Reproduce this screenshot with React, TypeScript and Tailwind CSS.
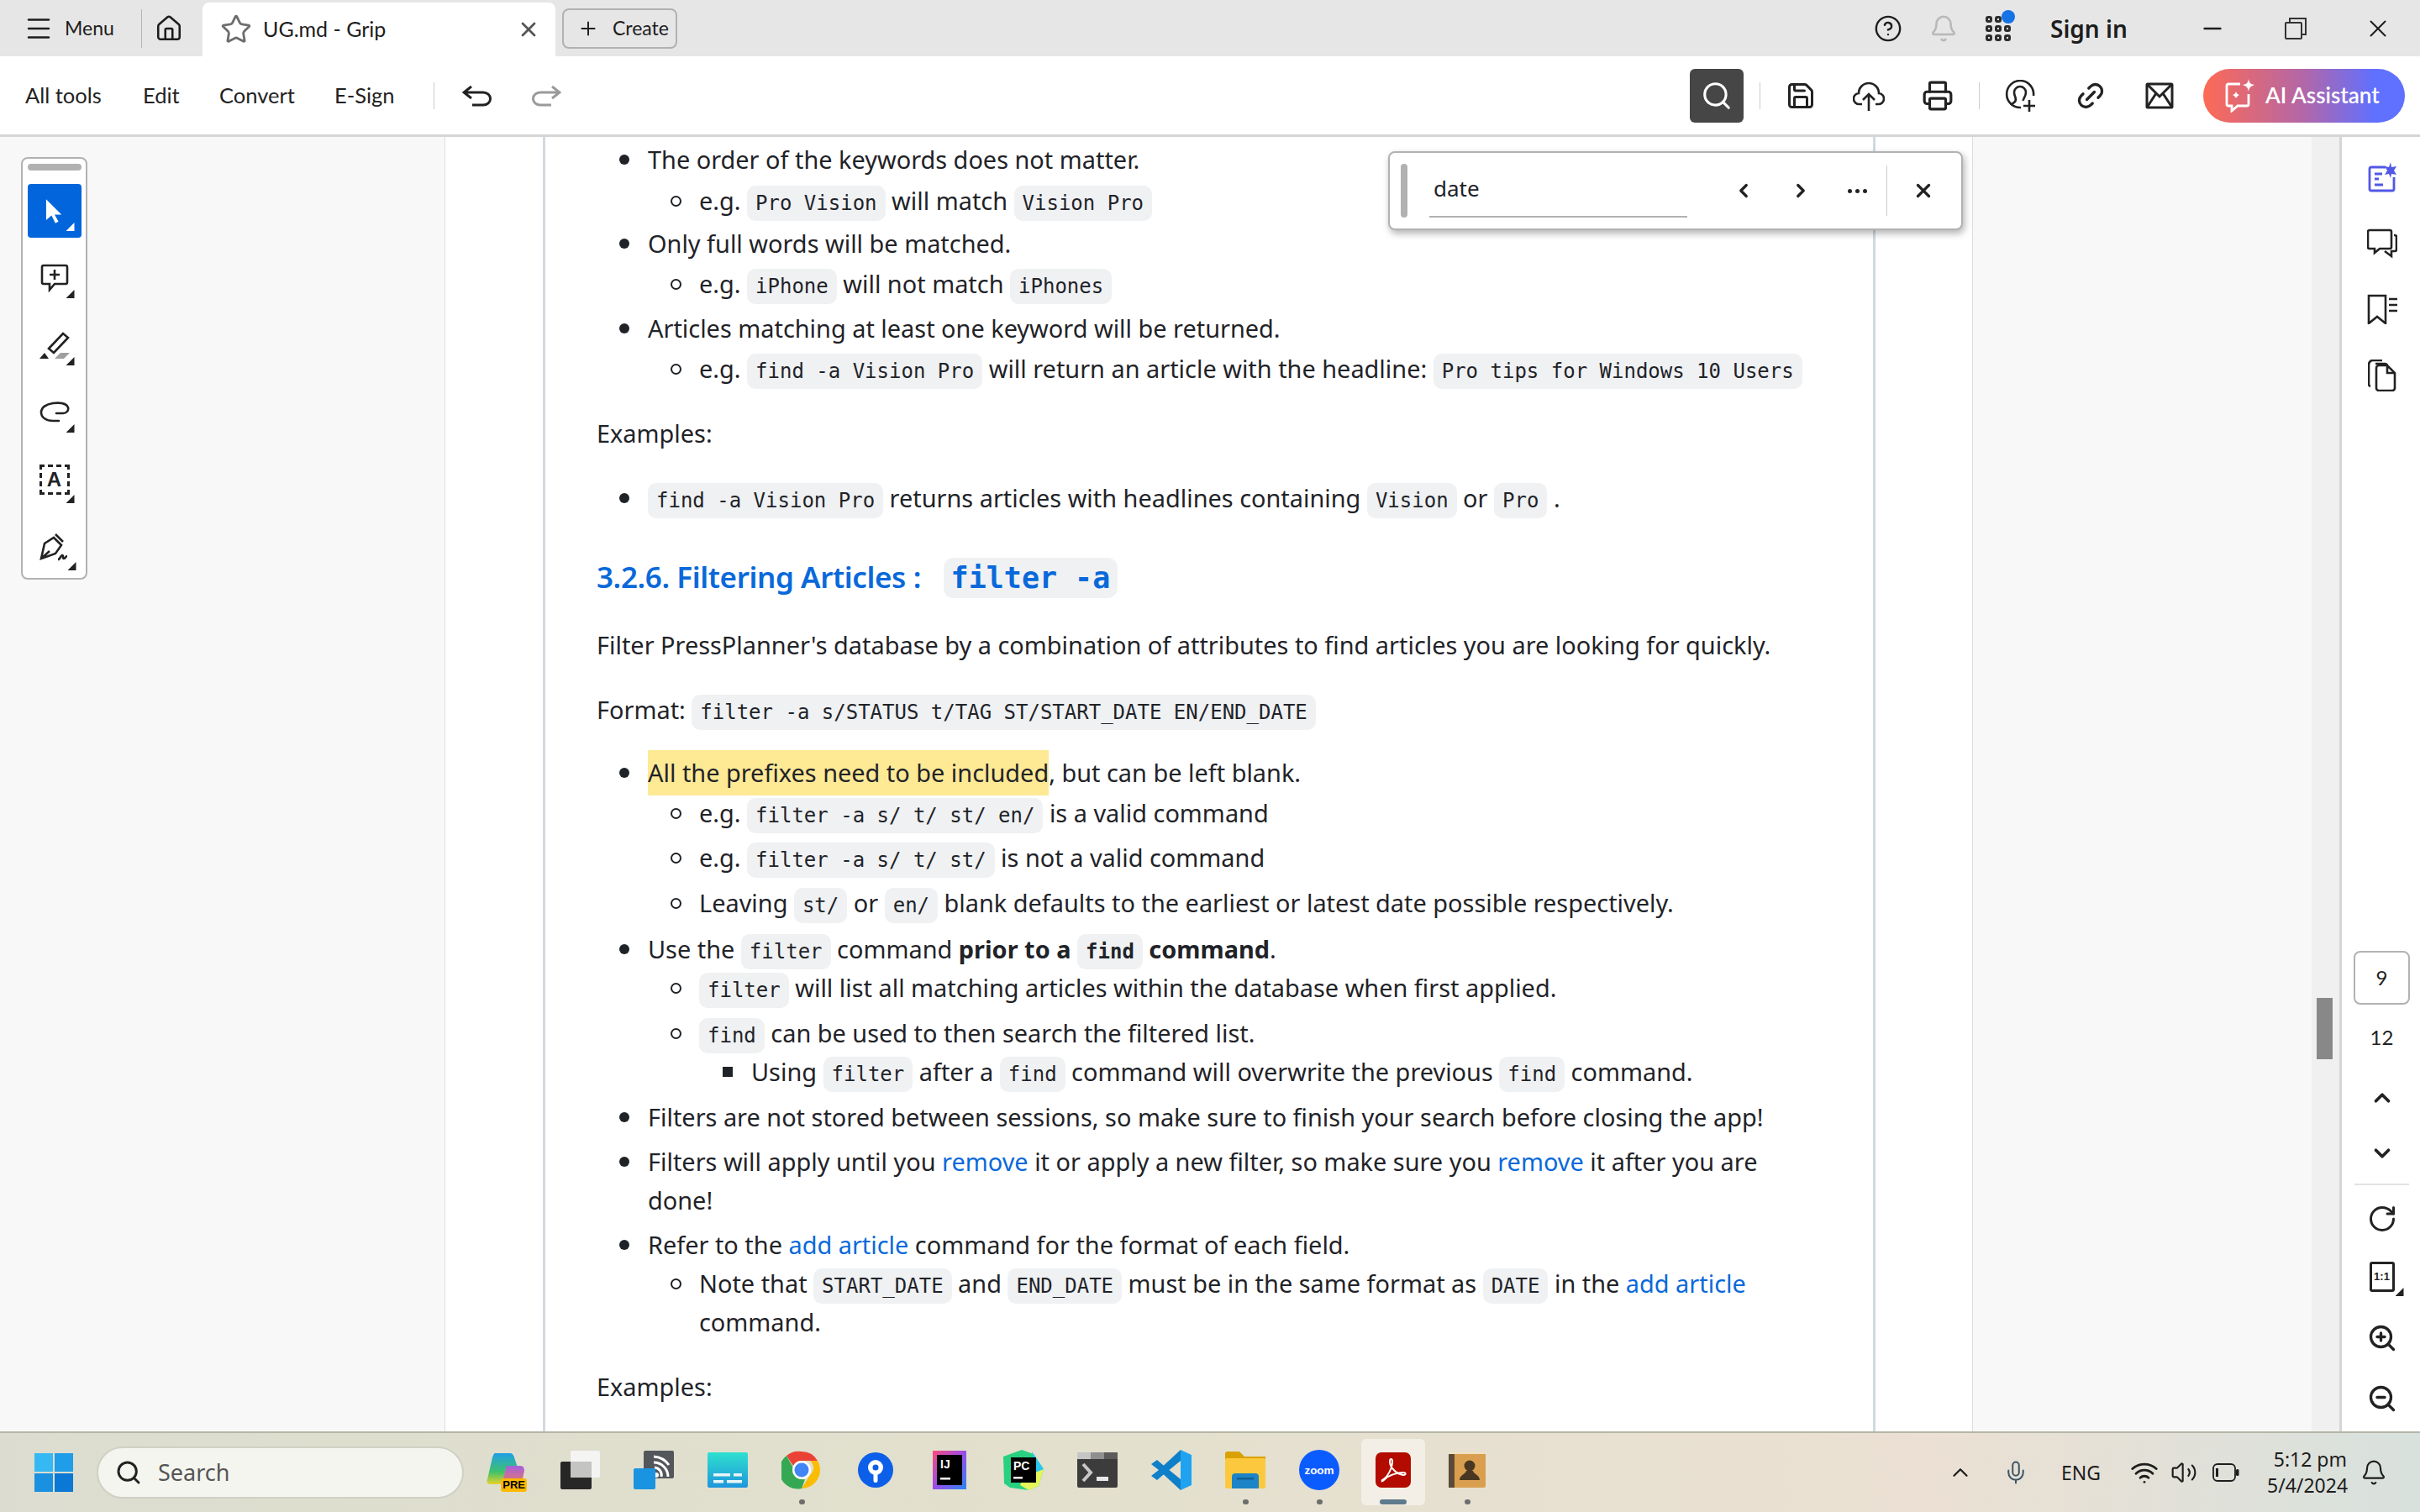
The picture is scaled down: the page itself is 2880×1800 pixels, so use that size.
import type { ReactNode } from "react"
import {
  ChevronLeft,
  ChevronRight,
  ChevronUp,
  ChevronDown,
  CircleHelp,
  Bell,
  Home,
  Link2,
  Menu,
  Minus,
  Plus,
  Printer,
  RotateCw,
  Save,
  Search,
  Star,
  X,
  ZoomIn,
  ZoomOut,
  Mic,
  Wifi,
  Volume2,
} from "lucide-react"

const UI = "font-['Lato','Noto_Sans',sans-serif]"

const BULLETS = {
  disc: "before:left-[-34px] before:top-[17px] before:h-[12px] before:w-[12px] before:rounded-full before:bg-[#1f2328]",
  circle: "before:left-[-34px] before:top-[17px] before:h-[13px] before:w-[13px] before:rounded-full before:border-2 before:border-[#1f2328]",
  square: "before:left-[-34px] before:top-[17px] before:h-[12px] before:w-[12px] before:bg-[#1f2328]",
}

function Li({ kind = "disc", className = "", children }: { kind?: keyof typeof BULLETS; className?: string; children: ReactNode }) {
  return <li className={`relative before:absolute before:content-[''] ${BULLETS[kind]} ${className}`}>{children}</li>
}

function C({ children, className = "" }: { children: ReactNode; className?: string }) {
  return (
    <code className={`rounded-[10px] bg-[#eff1f3] px-[10px] py-[7px] font-['DejaVu_Sans_Mono',monospace] text-[24px] leading-none ${className}`}>
      {children}
    </code>
  )
}

function A({ children }: { children: ReactNode }) {
  return <span className="text-[#0969da]">{children}</span>
}

function Corner({ className = "bg-[#222]" }: { className?: string }) {
  return <span className={`absolute bottom-0 right-0 h-[10px] w-[10px] [clip-path:polygon(100%_0,100%_100%,0_100%)] ${className}`} />
}

function ToolCell({ children }: { children: ReactNode }) {
  return <div className="relative mt-[16px] flex h-[64px] w-[64px] items-center justify-center first:mt-0">{children}</div>
}

function Chrome() {
  return (
    <svg viewBox="0 0 48 48" className="h-[48px] w-[48px]">
      <path d="M24 2a22 22 0 0 1 19 11H24a11 11 0 0 0-10 6L6 7a22 22 0 0 1 18-5z" fill="#ea4335" />
      <path d="M43 13a22 22 0 0 1-19 33l10-16a11 11 0 0 0 0-17z" fill="#fbbc04" />
      <path d="M6 7l9 16a11 11 0 0 0 13 12l-4 11A22 22 0 0 1 6 7z" fill="#34a853" />
      <circle cx="24" cy="24" r="11" fill="#fff" />
      <circle cx="24" cy="24" r="8.5" fill="#4285f4" />
    </svg>
  )
}

const taskIcons: { key: string; node: ReactNode; dot?: boolean; active?: boolean }[] = [
  {
    key: "copilot",
    node: (
      <div className="relative h-[46px] w-[46px]">
        <svg viewBox="0 0 46 46" className="h-[46px] w-[46px]">
          <defs>
            <linearGradient id="cp1" x1="0" y1="0" x2="0" y2="1">
              <stop offset="0" stopColor="#1f9fe8" />
              <stop offset="0.6" stopColor="#3fc26b" />
              <stop offset="1" stopColor="#e8d32a" />
            </linearGradient>
            <linearGradient id="cp2" x1="0" y1="0" x2="0" y2="1">
              <stop offset="0" stopColor="#a65fe0" />
              <stop offset="1" stopColor="#f08050" />
            </linearGradient>
          </defs>
          <path d="M10 3h18c3 0 4 2 5 5l4 12H24L19 36c-1 3-3 4-6 4H4c-3 0-4-3-3-6L7 8c1-3 2-5 3-5z" fill="url(#cp1)" />
          <path d="M24 18h16c4 0 5 3 5 6l-3 14c-1 3-3 5-6 5H17l7-25z" fill="url(#cp2)" />
        </svg>
        <span className="absolute bottom-[-3px] right-[-2px] rounded-[3px] bg-[#fcb900] px-[2px] font-['Liberation_Sans',sans-serif] text-[13px] font-bold leading-[16px] text-black">PRE</span>
      </div>
    ),
  },
  {
    key: "taskview",
    node: (
      <svg viewBox="0 0 48 46" className="h-[46px] w-[48px]">
        <rect x="1" y="13" width="37" height="33" rx="2" fill="#272727" />
        <rect x="13" y="0" width="35" height="32" rx="2" fill="#f4f4f2" />
        <rect x="13" y="13" width="25" height="19" fill="#c4c4c2" />
      </svg>
    ),
  },
  {
    key: "rss",
    node: (
      <svg viewBox="0 0 48 46" className="h-[46px] w-[48px]">
        <rect x="12" y="0" width="36" height="33" rx="2" fill="#53565a" />
        <path d="M24 14a17 17 0 0 1 17 17M24 7a24 24 0 0 1 18 10" fill="none" stroke="#fff" strokeWidth="3" />
        <path d="M25 20a9 9 0 0 1 8 11" fill="none" stroke="#fff" strokeWidth="3" />
        <circle cx="27" cy="29" r="3" fill="#fff" />
        <rect x="0" y="21" width="26" height="25" rx="2" fill="#1a94e0" />
      </svg>
    ),
  },
  {
    key: "widgets",
    node: (
      <svg viewBox="0 0 48 42" className="h-[42px] w-[48px]">
        <defs>
          <linearGradient id="wd" x1="0" y1="0" x2="0" y2="1">
            <stop offset="0" stopColor="#2fe0cf" />
            <stop offset="1" stopColor="#1f96dc" />
          </linearGradient>
        </defs>
        <rect width="48" height="42" rx="2" fill="url(#wd)" />
        <rect x="7" y="25" width="20" height="3.5" fill="#e9f5f8" />
        <rect x="31" y="25" width="10" height="3.5" fill="#e9f5f8" />
        <rect x="7" y="33" width="12" height="3.5" fill="#e9f5f8" />
        <rect x="23" y="33" width="18" height="3.5" fill="#e9f5f8" />
      </svg>
    ),
  },
  { key: "chrome", node: <Chrome />, dot: true },
  {
    key: "sourcetree",
    node: (
      <svg viewBox="0 0 42 48" className="h-[48px] w-[42px]">
        <circle cx="21" cy="24" r="21" fill="#0b5fe8" />
        <circle cx="21" cy="21" r="9" fill="#fff" />
        <circle cx="21" cy="21" r="3.5" fill="#0b5fe8" />
        <rect x="18.5" y="26" width="5" height="13" rx="2.5" fill="#fff" />
      </svg>
    ),
  },
  {
    key: "intellij",
    node: (
      <svg viewBox="0 0 40 46" className="h-[46px] w-[40px]">
        <defs>
          <linearGradient id="ij" x1="0" y1="0" x2="1" y2="1">
            <stop offset="0" stopColor="#fc4a7a" />
            <stop offset="0.5" stopColor="#9b4de8" />
            <stop offset="1" stopColor="#2687f5" />
          </linearGradient>
        </defs>
        <rect width="40" height="46" fill="url(#ij)" />
        <rect x="5" y="5" width="30" height="36" fill="#000" />
        <text x="9" y="21" fill="#fff" fontFamily="Liberation Sans" fontWeight="700" fontSize="14">IJ</text>
        <rect x="9" y="32" width="12" height="2.5" fill="#fff" />
      </svg>
    ),
  },
  {
    key: "pycharm",
    node: (
      <svg viewBox="0 0 48 48" className="h-[48px] w-[48px]">
        <path d="M0 8L22 0l14 5 12 18-6 20-12 5-22-3-7-5z" fill="#27d17f" />
        <path d="M30 20l18 3-6 20-12 5-10-6z" fill="#e6f65a" />
        <path d="M34 2l14 21-10 4z" fill="#2bc7f0" />
        <rect x="9" y="9" width="30" height="30" fill="#000" />
        <text x="12" y="24" fill="#fff" fontFamily="Liberation Sans" fontWeight="700" fontSize="14">PC</text>
        <rect x="12" y="32" width="11" height="2.5" fill="#fff" />
      </svg>
    ),
  },
  {
    key: "terminal",
    node: (
      <svg viewBox="0 0 48 42" className="h-[42px] w-[48px]">
        <rect width="48" height="42" rx="2" fill="#3c3c3c" />
        <rect width="16" height="8" fill="#c5c5c5" />
        <rect x="16" width="16" height="8" fill="#8f8f8f" />
        <rect x="32" width="16" height="8" fill="#5b5b5b" />
        <path d="M7 14l9 10-9 10" fill="none" stroke="#c8c8c8" strokeWidth="4" />
        <rect x="23" y="29" width="14" height="5" fill="#e8e8e8" />
      </svg>
    ),
  },
  {
    key: "vscode",
    node: (
      <svg viewBox="0 0 48 48" className="h-[48px] w-[48px]">
        <path d="M35 0l13 6v36l-13 6z" fill="#1fa3f0" />
        <path d="M35 0v13L14 30l-7 6-7-5 9-7z" fill="#0e7fc9" />
        <path d="M35 48V35L14 18 7 12l-7 5 9 7z" fill="#0e7fc9" />
      </svg>
    ),
  },
  {
    key: "explorer",
    node: (
      <svg viewBox="0 0 48 44" className="h-[44px] w-[48px]">
        <path d="M0 3a3 3 0 0 1 3-3h14l6 6h25v4H0z" fill="#d9a100" />
        <rect y="8" width="48" height="36" rx="2" fill="#fcc93e" />
        <path d="M8 44V30a4 4 0 0 1 4-4h24a4 4 0 0 1 4 4v14z" fill="#1c84c7" />
        <rect x="14" y="31" width="20" height="2.5" fill="#0e5f96" />
      </svg>
    ),
    dot: true,
  },
  {
    key: "zoom",
    node: (
      <svg viewBox="0 0 48 48" className="h-[48px] w-[48px]">
        <circle cx="24" cy="24" r="24" fill="#0b5cff" />
        <text x="24" y="29" textAnchor="middle" fill="#fff" fontFamily="Liberation Sans" fontWeight="700" fontSize="13.5">zoom</text>
      </svg>
    ),
    dot: true,
  },
  {
    key: "acrobat",
    node: (
      <svg viewBox="0 0 42 42" className="h-[42px] w-[42px]">
        <rect width="42" height="42" rx="7" fill="#b30b00" />
        <path d="M8 33c6-3 12-14 12-22 0-4-3-4-3 0 0 7 8 15 16 16 4 0 3-3 0-3-7 0-17 3-22 8-3 3-4 3-3 1z" fill="none" stroke="#fff" strokeWidth="2" />
      </svg>
    ),
    active: true,
  },
  {
    key: "contacts",
    node: (
      <svg viewBox="0 0 44 42" className="h-[42px] w-[44px]">
        <rect width="44" height="42" rx="2" fill="#d99f4f" />
        <rect width="7" height="42" fill="#5c4a38" />
        <rect width="44" height="2" fill="#f2e0c0" />
        <circle cx="25" cy="16" r="6.5" fill="#4a3722" />
        <path d="M13 33c0-6 7-7 8-11h8c1 4 8 5 8 11z" fill="#4a3722" />
      </svg>
    ),
    dot: true,
  },
]

export default function App() {
  return (
    <div className="flex h-[1800px] w-[2880px] flex-col overflow-hidden bg-white text-[#1f2328]">
      {/* title bar */}
      <div className={`flex h-[67px] shrink-0 items-center bg-[#e6e6e6] text-[#1d1d1d] ${UI}`}>
        <Menu className="ml-[28px] h-[36px] w-[36px]" strokeWidth={1.6} />
        <span className="ml-[13px] w-[60px] text-[23px]">Menu</span>
        <div className="ml-[31px] h-[46px] w-px bg-[#b5b5b5]" />
        <Home className="ml-[15px] h-[34px] w-[34px]" strokeWidth={1.8} />
        <div className="ml-[23px] mt-[3px] flex h-[64px] w-[420px] items-center rounded-t-[8px] bg-white">
          <Star className="ml-[21px] h-[38px] w-[38px] text-[#6e6e6e]" strokeWidth={1.8} />
          <span className="ml-[13px] text-[25px]">UG.md - Grip</span>
          <X className="ml-auto mr-[18px] h-[28px] w-[28px] text-[#555]" strokeWidth={2.4} />
        </div>
        <div className="ml-[8px] flex h-[48px] w-[137px] items-center rounded-[8px] border-2 border-[#b1b1b1]">
          <Plus className="ml-[16px] h-[26px] w-[26px]" strokeWidth={1.8} />
          <span className="ml-[16px] text-[23px]">Create</span>
        </div>
        <CircleHelp className="ml-[1424px] h-[34px] w-[34px]" strokeWidth={1.7} />
        <Bell className="ml-[32px] h-[34px] w-[34px] text-[#b8b8b8]" strokeWidth={1.8} />
        <div className="relative ml-[33px] grid h-[30px] w-[30px] grid-cols-3 gap-[3px]">
          {[0, 1, 2, 3, 4, 5, 6, 7, 8].map((n) => (
            <span key={n} className="rounded-[3px] border-[3px] border-[#2c2c2c]" />
          ))}
          <span className="absolute right-[-5px] top-[-7px] h-[16px] w-[16px] rounded-full bg-[#1473e6]" />
        </div>
        <span className="ml-[47px] font-['Noto_Sans',sans-serif] text-[28px] font-semibold">Sign in</span>
        <Minus className="ml-[85px] h-[32px] w-[32px]" strokeWidth={2} />
        <svg viewBox="0 0 26 26" className="ml-[70px] h-[26px] w-[26px]" fill="none" stroke="#333" strokeWidth="2">
          <rect x="1" y="6" width="19" height="19" rx="1" />
          <path d="M6 6V1h19v19h-5" />
        </svg>
        <X className="ml-[68px] h-[34px] w-[34px]" strokeWidth={1.4} />
      </div>

      {/* toolbar */}
      <div className={`flex h-[96px] shrink-0 items-center whitespace-nowrap border-b-[3px] border-[#d5d5d5] text-[#222] ${UI}`}>
        <span className="ml-[30px] w-[91px] text-[25.5px]">All tools</span>
        <span className="ml-[49px] w-[43px] text-[25.5px]">Edit</span>
        <span className="ml-[48px] w-[89px] text-[25.5px]">Convert</span>
        <span className="ml-[48px] w-[70px] text-[25.5px]">E-Sign</span>
        <div className="ml-[48px] h-[32px] w-px bg-[#ccc]" />
        <svg viewBox="0 0 36 26" className="ml-[33px] h-[26px] w-[36px]" fill="none" stroke="#222" strokeWidth="3">
          <path d="M11 2L2 9l9 7M3 9h22a8 7 0 0 1 0 15h-13" />
        </svg>
        <svg viewBox="0 0 36 26" className="ml-[46px] h-[26px] w-[36px]" fill="none" stroke="#9a9a9a" strokeWidth="3">
          <path d="M25 2l9 7-9 7M33 9H11a8 7 0 0 0 0 15h13" />
        </svg>
        <div className="ml-[1343px] flex h-[64px] w-[64px] items-center justify-center rounded-[6px] bg-[#464646]">
          <Search className="h-[38px] w-[38px] text-white" strokeWidth={2} />
        </div>
        <div className="ml-[19px] h-[32px] w-px bg-[#ccc]" />
        <Save className="ml-[30px] h-[36px] w-[36px]" strokeWidth={2} />
        <svg viewBox="0 0 38 38" className="ml-[44px] h-[38px] w-[38px]" fill="none" stroke="#222" strokeWidth="2.6">
          <path d="M11 29H8a6.5 6.5 0 0 1-1-13 11 11 0 0 1 24 0 6.5 6.5 0 0 1-1 13h-3" />
          <path d="M19 37V18M12 24l7-7 7 7" />
        </svg>
        <Printer className="ml-[44px] h-[38px] w-[38px]" strokeWidth={2} />
        <div className="ml-[30px] h-[32px] w-px bg-[#ccc]" />
        <svg viewBox="0 0 38 38" className="ml-[29px] h-[38px] w-[38px]" fill="none" stroke="#222" strokeWidth="2.6">
          <path d="M20 33a16 16 0 1 1 15-14" />
          <path d="M19 8a7 7 0 0 1 7 7c0 5-4 8-3 10M19 8a7 7 0 0 0-7 7c0 5 4 8 1 11-2 2-4 3-5 4" />
          <path d="M30 24v14M23 31h14" />
        </svg>
        <Link2 className="ml-[46px] h-[38px] w-[38px] -rotate-45" strokeWidth={2.1} />
        <svg viewBox="0 0 34 34" className="ml-[46px] h-[34px] w-[34px]" fill="none" stroke="#222" strokeWidth="3">
          <rect x="2" y="3" width="30" height="28" rx="1" />
          <path d="M2 3l15 15L32 3M2 31l11-17M32 31L21 14" />
        </svg>
        <div className="ml-[35px] flex h-[64px] w-[240px] items-center rounded-full bg-[linear-gradient(90deg,#fd6a55,#b267a8_50%,#6070ff_85%)]">
          <svg viewBox="0 0 40 40" className="ml-[24px] h-[40px] w-[40px]" fill="none" stroke="#fff" strokeWidth="2.8">
            <path d="M20 6H6a2 2 0 0 0-2 2v22a2 2 0 0 0 2 2h4v6l7-6h11a2 2 0 0 0 2-2V18" />
            <path d="M30 0c1 5 2 6 7 7-5 2-6 3-7 8-1-5-2-6-7-8 5-1 6-2 7-7z" fill="#fff" stroke="none" />
            <path d="M15 15c1 3 2 3 4 4-2 1-3 2-4 4-1-2-2-3-4-4 2-1 3-1 4-4z" fill="#fff" stroke="none" />
          </svg>
          <span className="ml-[10px] text-[26px] font-semibold text-white">AI Assistant</span>
        </div>
      </div>

      {/* main area */}
      <div className="relative flex min-h-0 flex-1">
        <div className="w-[530px] shrink-0 border-r border-[#ddd] bg-[#f8f8f8] pl-[25px] pt-[24px]">
          <div className="flex h-[503px] w-[79px] flex-col items-center rounded-[8px] border-2 border-[#b2b2b2] bg-white pt-[6px]">
            <div className="h-[8px] w-[64px] rounded-full bg-[#b1b1b1]" />
            <div className="relative mt-[16px] flex h-[64px] w-[64px] items-center justify-center rounded-[4px] bg-[#0265dc]">
              <svg viewBox="0 0 24 32" className="h-[30px] w-[22px]" fill="#fff">
                <path d="M1 1l20 20-9 0 5 9-4 2-5-10-7 6z" />
              </svg>
              <Corner className="bottom-[8px] right-[8px] bg-white" />
            </div>
            <div className="mt-[16px] flex flex-col">
              <ToolCell>
                <svg viewBox="0 0 34 34" className="h-[34px] w-[34px]" fill="none" stroke="#222" strokeWidth="2.6">
                  <path d="M4 2h26a2 2 0 0 1 2 2v18a2 2 0 0 1-2 2H17l-6 7v-7H4a2 2 0 0 1-2-2V4a2 2 0 0 1 2-2zM17 7v12M11 13h12" />
                </svg>
                <Corner className="bottom-[8px] right-[8px] bg-[#222]" />
              </ToolCell>
              <ToolCell>
                <svg viewBox="0 0 36 34" className="h-[34px] w-[36px]" fill="none" stroke="#222" strokeWidth="2.6">
                  <path d="M11 21L28 3l6 5-17 18z" />
                  <path d="M0 33l6-7 5 7z" fill="#222" stroke="none" />
                  <path d="M18 33l7-7h11l-7 7z" fill="#9f9f9f" stroke="none" />
                </svg>
                <Corner className="bottom-[8px] right-[8px] bg-[#222]" />
              </ToolCell>
              <ToolCell>
                <svg viewBox="0 0 36 26" className="h-[26px] w-[36px]" fill="none" stroke="#222" strokeWidth="2.6">
                  <path d="M20 14h8c4 0 7-3 6-7-2-5-10-6-18-5C8 3 2 7 2 13c0 6 6 10 14 10h7" strokeLinecap="round" />
                </svg>
                <Corner className="bottom-[8px] right-[8px] bg-[#222]" />
              </ToolCell>
              <ToolCell>
                <div className="flex h-[36px] w-[36px] items-center justify-center border-[3px] border-dashed border-[#222] font-['Liberation_Sans',sans-serif] text-[24px] font-bold">A</div>
                <Corner className="bottom-[4px] right-[8px] bg-[#222]" />
              </ToolCell>
              <ToolCell>
                <svg viewBox="0 0 36 34" className="h-[34px] w-[36px]" fill="none" stroke="#222" strokeWidth="2.6">
                  <path d="M2 31l4-18 11-7 9 9-7 10zM2 31l10-9M19 2l9 9" />
                  <path d="M22 32c3 0 3-5 5-5s0 4 2 4 2-3 4-3" />
                </svg>
                <Corner className="bottom-[4px] right-[6px] bg-[#222]" />
              </ToolCell>
            </div>
          </div>
        </div>

        <div className="flex w-[1818px] shrink-0 border-r border-[#ddd] bg-white pl-[116px]">
          <div className="w-[1586px] overflow-hidden whitespace-nowrap border-x-[3px] border-[#d1d9e0] pl-[61px] pt-[4px] font-['Noto_Sans',sans-serif] text-[28.9px] leading-[46px]">
            <ul className="pl-[61px]">
              <Li>
                The order of the keywords does not matter.
                <ul className="pl-[61px]">
                  <Li kind="circle" className="mt-[3px]">e.g. <C>Pro Vision</C> will match <C>Vision Pro</C></Li>
                </ul>
              </Li>
              <Li className="mt-[5px]">
                Only full words will be matched.
                <ul className="pl-[61px]">
                  <Li kind="circle" className="mt-[2px]">e.g. <C>iPhone</C> will not match <C>iPhones</C></Li>
                </ul>
              </Li>
              <Li className="mt-[7px]">
                Articles matching at least one keyword will be returned.
                <ul className="pl-[61px]">
                  <Li kind="circle" className="mt-[2px]">e.g. <C>find -a Vision Pro</C> will return an article with the headline: <C>Pro tips for Windows 10 Users</C></Li>
                </ul>
              </Li>
            </ul>
            <p className="mt-[31px]">Examples:</p>
            <ul className="mt-[31px] pl-[61px]">
              <Li><C>find -a Vision Pro</C> returns articles with headlines containing <C>Vision</C> or <C>Pro</C> .</Li>
            </ul>
            <h2 className="mt-[48px] text-[35px] font-semibold tracking-[-0.4px] text-[#0969da]">
              3.2.6. Filtering Articles : <code className="ml-[18px] rounded-[12px] bg-[#eff1f3] px-[9px] py-[4px] font-['DejaVu_Sans_Mono',monospace] text-[35px] font-bold leading-none tracking-normal">filter -a</code>
            </h2>
            <p className="mt-[35px]">Filter PressPlanner's database by a combination of attributes to find articles you are looking for quickly.</p>
            <p className="mt-[31px]">Format: <C>filter -a s/STATUS t/TAG ST/START_DATE EN/END_DATE</C></p>
            <ul className="mt-[29px] pl-[61px]">
              <Li>
                <span className="-my-[4px] inline-block h-[54px] bg-[#fee995] leading-[54px]">All the prefixes need to be included</span>, but can be left blank.
                <ul className="pl-[61px]">
                  <Li kind="circle" className="mt-[2px]">e.g. <C>filter -a s/ t/ st/ en/</C> is a valid command</Li>
                  <Li kind="circle" className="mt-[7px]">e.g. <C>filter -a s/ t/ st/</C> is not a valid command</Li>
                  <Li kind="circle" className="mt-[8px]">Leaving <C>st/</C> or <C>en/</C> blank defaults to the earliest or latest date possible respectively.</Li>
                </ul>
              </Li>
              <Li className="mt-[9px]">
                Use the <C>filter</C> command <b>prior to a</b> <C className="font-bold">find</C> <b>command</b>.
                <ul className="pl-[61px]">
                  <Li kind="circle"><C>filter</C> will list all matching articles within the database when first applied.</Li>
                  <Li kind="circle" className="mt-[8px]">
                    <C>find</C> can be used to then search the filtered list.
                    <ul className="pl-[62px]">
                      <Li kind="square">Using <C>filter</C> after a <C>find</C> command will overwrite the previous <C>find</C> command.</Li>
                    </ul>
                  </Li>
                </ul>
              </Li>
              <Li className="mt-[8px]">Filters are not stored between sessions, so make sure to finish your search before closing the app!</Li>
              <Li className="mt-[7px]">
                Filters will apply until you <A>remove</A> it or apply a new filter, so make sure you <A>remove</A> it after you are
                <br />
                done!
              </Li>
              <Li className="mt-[7px]">
                Refer to the <A>add article</A> command for the format of each field.
                <ul className="pl-[61px]">
                  <Li kind="circle">
                    Note that <C>START_DATE</C> and <C>END_DATE</C> must be in the same format as <C>DATE</C> in the <A>add article</A>
                    <br />
                    command.
                  </Li>
                </ul>
              </Li>
            </ul>
            <p className="mt-[31px]">Examples:</p>
          </div>
        </div>

        <div className="w-[403px] shrink-0 bg-[#f8f8f8]" />
        <div className="w-[33px] shrink-0 bg-[#f0f0f0] pl-[6px] pt-[1025px]">
          <div className="h-[73px] w-[19px] bg-[#888]" />
        </div>

        <div className={`flex flex-1 flex-col items-center border-l-[3px] border-[#d5d5d5] bg-white pl-[2px] text-[#222] ${UI}`}>
          <svg viewBox="0 0 36 36" className="mt-[30px] h-[36px] w-[36px]" fill="none" stroke="#5258e4" strokeWidth="2.8">
            <path d="M22 6H5a2 2 0 0 0-2 2v24a2 2 0 0 0 2 2h25a2 2 0 0 0 2-2V18M9 14h9M9 20h5M9 27h10" />
            <path d="M28 0l1 6 6-1-3 5 3 5-6-1-1 5-2-5-5 1 3-5-3-5 5 1z" fill="#5258e4" stroke="none" />
          </svg>
          <svg viewBox="0 0 36 36" className="mt-[43px] h-[36px] w-[36px]" fill="none" stroke="#222" strokeWidth="2.6">
            <path d="M3 2h24a2 2 0 0 1 2 2v18a2 2 0 0 1-2 2H15l-6 5v-5H3a2 2 0 0 1-2-2V4a2 2 0 0 1 2-2z" />
            <path d="M32 8h1a2 2 0 0 1 2 2v15a2 2 0 0 1-2 2h-4v6l-8-6" />
          </svg>
          <svg viewBox="0 0 36 36" className="mt-[42px] h-[36px] w-[36px]" fill="none" stroke="#222" strokeWidth="2.6">
            <path d="M2 2h20v33l-10-8-10 8zM26 6h10M26 13h10M26 20h10" />
          </svg>
          <svg viewBox="0 0 34 38" className="mt-[42px] h-[38px] w-[34px]" fill="none" stroke="#222" strokeWidth="2.6">
            <path d="M9 5H20a3 3 0 0 1 3 2M3 32a3 3 0 0 1-2-3V6a5 5 0 0 1 5-5h11" />
            <path d="M10 10a3 3 0 0 1 3-3h10l9 9v18a3 3 0 0 1-3 3H13a3 3 0 0 1-3-3zM23 7v9h9" />
          </svg>

          <div className="mt-[666px] flex h-[64px] w-[67px] items-center justify-center rounded-[8px] border-2 border-[#b2b2b2] text-[24px]">9</div>
          <span className="mt-[21px] text-[24px] leading-[36px]">12</span>
          <ChevronUp className="mt-[39px] h-[30px] w-[30px]" strokeWidth={3} />
          <ChevronDown className="mt-[36px] h-[30px] w-[30px]" strokeWidth={3} />
          <div className="mt-[21px] h-[2px] w-[65px] bg-[#e2e2e2]" />
          <RotateCw className="mt-[22px] h-[36px] w-[36px]" strokeWidth={2} />
          <div className="relative mt-[33px] flex h-[36px] w-[30px] items-center justify-center rounded-[3px] border-[3px] border-[#222] font-['Liberation_Sans',sans-serif] text-[13px] font-bold">
            1:1
            <Corner className="bottom-[-8px] right-[-14px] bg-[#222]" />
          </div>
          <ZoomIn className="mt-[37px] h-[36px] w-[36px]" strokeWidth={2.2} />
          <ZoomOut className="mt-[36px] h-[36px] w-[36px]" strokeWidth={2.2} />
        </div>

        {/* find box floats over the page */}
        <div className="absolute left-[1652px] top-[17px] flex h-[94px] w-[684px] items-center rounded-[8px] border-2 border-[#b2b2b2] bg-white shadow-[2px_4px_8px_rgba(0,0,0,0.3)]">
          <div className="ml-[13px] h-[64px] w-[8px] rounded-full bg-[#b1b1b1]" />
          <div className="ml-[26px] flex h-[63px] w-[307px] items-center border-b-2 border-[#b1b1b1] pb-[3px] pl-[5px]">
            <span className="font-['Noto_Sans',sans-serif] text-[26px]">date</span>
          </div>
          <ChevronLeft className="ml-[54px] h-[26px] w-[26px] text-[#222]" strokeWidth={3} />
          <ChevronRight className="ml-[42px] h-[26px] w-[26px] text-[#222]" strokeWidth={3} />
          <div className="ml-[43px] flex gap-[4px]">
            <span className="h-[5px] w-[5px] rounded-full bg-[#222]" />
            <span className="h-[5px] w-[5px] rounded-full bg-[#222]" />
            <span className="h-[5px] w-[5px] rounded-full bg-[#222]" />
          </div>
          <div className="ml-[23px] h-[60px] w-px bg-[#ccc]" />
          <X className="ml-[30px] h-[26px] w-[26px] text-[#222]" strokeWidth={3} />
        </div>
      </div>

      {/* taskbar */}
      <div className="flex h-[96px] shrink-0 items-center border-t-2 border-[#b5b5a8] bg-[linear-gradient(90deg,#dcddd0,#e2e0cd_40%,#ebe0d3_80%,#d8e1dd)] pl-[41px] font-['Noto_Sans',sans-serif]">
        <div className="grid h-[46px] w-[46px] grid-cols-2 gap-[2px]">
          <span className="bg-[#36b8f4]" />
          <span className="bg-[#1f9de8]" />
          <span className="bg-[#1a90e0]" />
          <span className="bg-[#0a78d4]" />
        </div>
        <div className="ml-[28px] flex h-[62px] w-[437px] items-center rounded-full border-2 border-[#d0d0c4] bg-[#f4f5ef]">
          <Search className="ml-[20px] h-[32px] w-[32px] text-[#222]" strokeWidth={2.2} />
          <span className="ml-[19px] text-[27px] text-[#555]">Search</span>
        </div>
        <div className="ml-[6px] flex">
          {taskIcons.map((t) => (
            <div key={t.key} className="relative flex h-[94px] w-[88px] items-center justify-center">
              {t.active && <div className="absolute inset-x-[6px] bottom-[8px] top-[7px] rounded-[6px] bg-[#f3efe6]" />}
              <div className="relative mb-[6px]">{t.node}</div>
              {t.dot && <span className="absolute bottom-[9px] left-[41px] h-[6px] w-[7px] rounded-full bg-[#6d6d6d]" />}
              {t.active && <span className="absolute bottom-[9px] left-[28px] h-[6px] w-[32px] rounded-full bg-[#5e7a8c]" />}
            </div>
          ))}
        </div>
        <div className="ml-auto flex items-center pr-[39px] text-[#1d1d1d]">
          <ChevronUp className="h-[30px] w-[30px]" strokeWidth={1.8} />
          <Mic className="ml-[36px] h-[36px] w-[30px] text-[#3b5566]" strokeWidth={1.6} />
          <span className="ml-[39px] w-[44px] text-[23px]">ENG</span>
          <Wifi className="ml-[38px] h-[34px] w-[34px]" strokeWidth={2} />
          <Volume2 className="ml-[14px] h-[32px] w-[32px]" strokeWidth={1.6} />
          <svg viewBox="0 0 32 22" className="ml-[18px] h-[22px] w-[32px]" fill="none" stroke="#1d1d1d" strokeWidth="1.8">
            <rect x="1" y="1" width="26" height="20" rx="5" />
            <rect x="4" y="6" width="3" height="10" fill="#1d1d1d" stroke="none" />
            <rect x="28" y="7" width="3.5" height="8" rx="1.5" fill="#1d1d1d" stroke="none" />
          </svg>
          <div className="ml-[33px] w-[95px] text-right text-[23px] leading-[31px]">
            <div>5:12 pm</div>
            <div>5/4/2024</div>
          </div>
          <Bell className="ml-[16px] h-[32px] w-[32px]" strokeWidth={1.6} />
        </div>
      </div>
    </div>
  )
}
